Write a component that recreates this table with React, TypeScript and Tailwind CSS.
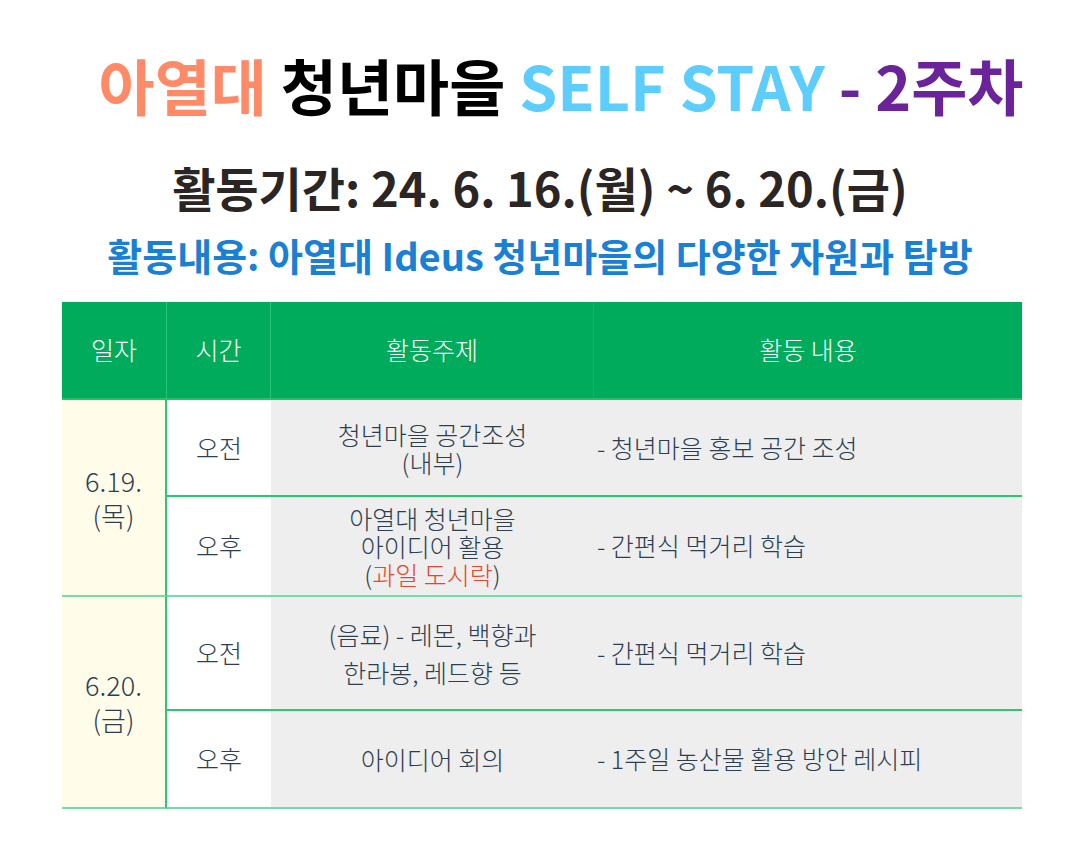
const font = { fontFamily: '"Noto Sans CJK KR", "Noto Sans", sans-serif' };

type Row = {
  time: string;
  topic: React.ReactNode;
  content: string;
  h: string;
};

function Cells({ row, last }: { row: Row; last: boolean }) {
  const line = last ? "border-[#74dca6]" : "border-[#2bc872]";
  return (
    <>
      <div className={`flex items-center justify-center bg-white border-b-2 ${line} ${row.h}`}>
        <span className="text-[25px] font-light text-[#2c3e50]">{row.time}</span>
      </div>
      <div className={`flex items-center justify-center bg-[#eeeeee] border-b-2 ${line} ${row.h}`}>
        <div className="text-center text-[25px] leading-[28px] font-light text-[#2c3e50]">{row.topic}</div>
      </div>
      <div className={`flex items-center bg-[#eeeeee] border-b-2 ${line} pl-[3px] ${row.h}`}>
        <span className="text-[25px] font-light text-[#2c3e50]">{row.content}</span>
      </div>
    </>
  );
}

export default function App() {
  const first: Row[] = [
    {
      time: "오전",
      topic: (
        <>
          <div>청년마을 공간조성</div>
          <div>(내부)</div>
        </>
      ),
      content: "- 청년마을 홍보 공간 조성",
      h: "h-[97px]",
    },
    {
      time: "오후",
      topic: (
        <>
          <div>아열대 청년마을</div>
          <div>아이디어 활용</div>
          <div>
            (<span className="text-[#e8452c]">과일 도시락</span>)
          </div>
        </>
      ),
      content: "- 간편식 먹거리 학습",
      h: "h-[100px]",
    },
  ];
  const second: Row[] = [
    {
      time: "오전",
      topic: (
        <div className="flex flex-col gap-[10px]">
          <div>(음료) - 레몬, 백향과</div>
          <div>한라봉, 레드향 등</div>
        </div>
      ),
      content: "- 간편식 먹거리 학습",
      h: "h-[114px]",
    },
    {
      time: "오후",
      topic: <div>아이디어 회의</div>,
      content: "- 1주일 농산물 활용 방안 레시피",
      h: "h-[98px]",
    },
  ];

  return (
    <div className="w-[1080px] h-[858px] bg-white overflow-hidden" style={font}>
      <div className="pt-[45px] pl-[42px] flex justify-center text-[61px] font-bold leading-[80px] whitespace-pre">
        <span className="text-[#ff8a68]">아열대 </span>
        <span className="text-black">청년마을 </span>
        <span className="text-[#5ccdfc]">SELF STAY </span>
        <span className="text-[#6a2399]">- 2주차</span>
      </div>

      <div className="mt-[34px] flex justify-center text-[47px] font-bold leading-[56px] text-[#2b2623]">
        활동기간: 24. 6. 16.(월) ~ 6. 20.(금)
      </div>
      <div className="mt-[17px] flex justify-center text-[38px] font-bold leading-[46px] text-[#1a80d6]">
        활동내용: 아열대 Ideus 청년마을의 다양한 자원과 탐방
      </div>

      <div className="mt-[24px] ml-[62px] w-[960px] grid grid-cols-[105px_104px_323px_428px]">
        <div className="h-[98px] bg-[#00ab5b] border-r border-b-2 border-r-[#2cc37a] border-b-[#1fc46c] flex items-center justify-center text-white text-[25px] font-light">일자</div>
        <div className="h-[98px] bg-[#00ab5b] border-r border-b-2 border-r-[#2cc37a] border-b-[#1fc46c] flex items-center justify-center text-white text-[25px] font-light">시간</div>
        <div className="h-[98px] bg-[#00ab5b] border-r border-b-2 border-r-[#14b465] border-b-[#1fc46c] flex items-center justify-center text-white text-[25px] font-light">활동주제</div>
        <div className="h-[98px] bg-[#00ab5b] border-b-2 border-b-[#1fc46c] flex items-center justify-center text-white text-[25px] font-light">활동 내용</div>

        <div className="row-span-2 bg-[#fffde9] border-r-2 border-r-[#2bc872] border-b-2 border-b-[#74dca6] flex flex-col items-center justify-center text-[27px] leading-[35px] font-light text-[#2c3e50]">
          <div>6.19.</div>
          <div>(목)</div>
        </div>
        <Cells row={first[0]} last={false} />
        <Cells row={first[1]} last={true} />

        <div className="row-span-2 bg-[#fffde9] border-r-2 border-r-[#2bc872] border-b-2 border-b-[#74dca6] flex flex-col items-center justify-center text-[27px] leading-[35px] font-light text-[#2c3e50]">
          <div>6.20.</div>
          <div>(금)</div>
        </div>
        <Cells row={second[0]} last={false} />
        <Cells row={second[1]} last={true} />
      </div>
    </div>
  );
}
